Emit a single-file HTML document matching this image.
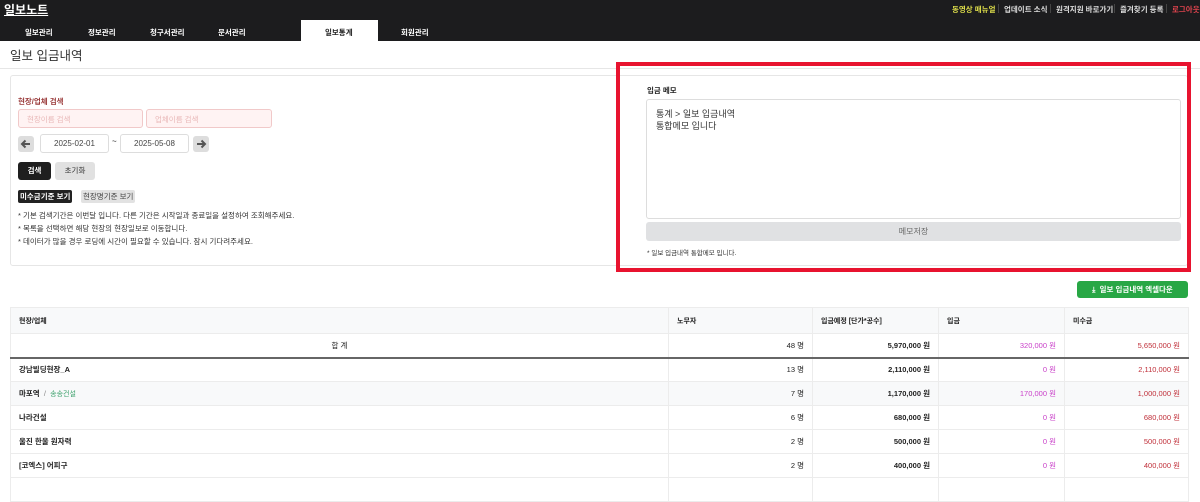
<!DOCTYPE html>
<html><head><meta charset="utf-8"><style>
*{box-sizing:border-box;margin:0;padding:0}
body{width:1200px;height:480px;overflow:hidden;background:#fff;font-family:"Liberation Sans","Noto Sans CJK KR",sans-serif;color:#222;position:relative;font-size:8px}
.a{position:absolute}
.top{left:0;top:0;width:1200px;height:41px;background:#1c1c1e}
.logo{left:4px;top:1px;color:#fff;font-weight:bold;font-size:12px;text-decoration:underline}
.tl{top:4px;font-size:7.5px;color:#ddd;font-weight:bold}
.sep{top:4px;width:1px;height:9px;background:#444}
.nav{top:27px;color:#fff;font-size:7.5px;font-weight:bold}
.card{border:1px solid #e6e6e6;border-radius:3px}
.inp{border:1px solid #f1c9c9;background:#fff3f3;border-radius:3px;color:#e9b8b8;font-size:7.5px;padding:4px 8px;height:19px}
.date{border:1px solid #ddd;border-radius:3px;height:19px;font-size:8px;color:#444;text-align:center;line-height:17px}
.arr{background:#ddd;border-radius:3px;width:16px;height:16px}
.arr svg{display:block}
.note{font-size:7.5px;color:#333;line-height:13px}
table{border-collapse:collapse;position:absolute;left:10px;top:307px;width:1179px;font-size:7.5px}
td{border:1px solid #ececec;height:24px;padding:0 8px}
th{border:1px solid #ececec;height:26px;padding:0 8px;text-align:left;font-weight:bold;font-size:7px;background:#f8f9fa}
.r{text-align:right}.b{font-weight:bold}
.pk{color:#c940c9}.rd{color:#c0303a}
tr.alt td{background:#f8f9fa}
</style></head><body>
<div class="a top"></div>
<div class="a logo">일보노트</div>
<div class="a tl" style="left:952px;color:#dede4a">동영상 매뉴얼</div>
<div class="a sep" style="left:998px"></div>
<div class="a tl" style="left:1004px">업데이트 소식</div>
<div class="a sep" style="left:1050px"></div>
<div class="a tl" style="left:1056px">원격지원 바로가기</div>
<div class="a sep" style="left:1114px"></div>
<div class="a tl" style="left:1120px">즐겨찾기 등록</div>
<div class="a sep" style="left:1166px"></div>
<div class="a tl" style="left:1172px;color:#e0434d">로그아웃</div>
<div class="a nav" style="left:25px">일보관리</div>
<div class="a nav" style="left:88px">정보관리</div>
<div class="a nav" style="left:150px">청구서관리</div>
<div class="a nav" style="left:218px">문서관리</div>
<div class="a" style="left:301px;top:20px;width:77px;height:21px;background:#fff"></div>
<div class="a nav" style="left:325px;color:#222">일보통계</div>
<div class="a nav" style="left:401px">회원관리</div>
<div class="a" style="left:10px;top:45px;font-size:12.5px;color:#333">일보 입금내역</div>
<div class="a" style="left:0;top:68px;width:1200px;height:1px;background:#e6e6e6"></div>
<div class="a card" style="left:10px;top:75px;width:1178px;height:191px"></div>
<div class="a" style="left:18px;top:96px;font-size:7.5px;font-weight:bold;color:#9a3a3a">현장/업체 검색</div>
<div class="a inp" style="left:18px;top:109px;width:125px">현장이름 검색</div>
<div class="a inp" style="left:146px;top:109px;width:126px">업체이름 검색</div>
<div class="a arr" style="left:18px;top:136px"><svg width="16" height="16" viewBox="0 0 16 16"><path d="M12 8H4M7.5 4.5L4 8l3.5 3.5" stroke="#555" stroke-width="2" fill="none"/></svg></div>
<div class="a date" style="left:40px;top:134px;width:69px">2025-02-01</div>
<div class="a" style="left:112px;top:137px;font-size:8px">~</div>
<div class="a date" style="left:120px;top:134px;width:69px">2025-05-08</div>
<div class="a arr" style="left:193px;top:136px"><svg width="16" height="16" viewBox="0 0 16 16"><path d="M4 8h8M8.5 4.5L12 8l-3.5 3.5" stroke="#555" stroke-width="2" fill="none"/></svg></div>
<div class="a" style="left:18px;top:162px;width:33px;height:18px;background:#1f1f1f;border-radius:3px;color:#fff;font-size:7.5px;font-weight:bold;text-align:center;line-height:18px">검색</div>
<div class="a" style="left:55px;top:162px;width:40px;height:18px;background:#e1e1e1;border-radius:3px;color:#333;font-size:7.5px;text-align:center;line-height:18px">초기화</div>
<div class="a" style="left:18px;top:190px;padding:1px 2px;background:#222;color:#fff;font-size:7.5px;font-weight:bold;border-radius:2px">미수금기준 보기</div>
<div class="a" style="left:81px;top:190px;padding:1px 2px;background:#e2e2e2;color:#444;font-size:7.5px;border-radius:2px">현장명기준 보기</div>
<div class="a note" style="left:18px;top:209px">* 기본 검색기간은 이번달 입니다. 다른 기간은 시작일과 종료일을 설정하여 조회해주세요.<br>* 목록을 선택하면 해당 현장의 현장일보로 이동합니다.<br>* 데이터가 많을 경우 로딩에 시간이 필요할 수 있습니다. 잠시 기다려주세요.</div>
<div class="a" style="left:616px;top:62px;width:575px;height:210px;border:4px solid #e8132f"></div>
<div class="a" style="left:647px;top:85px;font-size:7.5px;font-weight:bold">입금 메모</div>
<div class="a" style="left:646px;top:99px;width:535px;height:120px;border:1px solid #ddd;border-radius:3px;padding:8px 9px;font-size:9px;color:#333;line-height:12px">통계 &gt; 일보 입금내역<br>통합메모 입니다</div>
<div class="a" style="left:646px;top:222px;width:535px;height:19px;background:#e0e1e3;border-radius:3px;text-align:center;line-height:19px;font-size:8px;color:#666">메모저장</div>
<div class="a" style="left:647px;top:247px;font-size:6.5px;color:#333">* 일보 입금내역 통합메모 입니다.</div>
<div class="a" style="left:1077px;top:281px;width:111px;height:17px;background:#28a745;border-radius:3px;color:#fff;font-size:7.5px;font-weight:bold;text-align:center;line-height:17px">⤓ &nbsp;일보 입금내역 엑셀다운</div>
<table>
<tr><th style="width:658px">현장/업체</th><th style="width:144px">노무자</th><th style="width:126px">입금예정 [단가*공수]</th><th style="width:126px">입금</th><th>미수금</th></tr>
<tr style="border-bottom:2px solid #666"><td style="text-align:center">합 계</td><td class="r">48 명</td><td class="r b">5,970,000 원</td><td class="r pk">320,000 원</td><td class="r rd">5,650,000 원</td></tr>
<tr><td class="b">강남빌딩현장_A</td><td class="r">13 명</td><td class="r b">2,110,000 원</td><td class="r pk">0 원</td><td class="r rd">2,110,000 원</td></tr>
<tr class="alt"><td><b>마포역</b> <span style="color:#888">&nbsp;/&nbsp;</span> <span style="color:#3aa06a;font-size:7px">송송건설</span></td><td class="r">7 명</td><td class="r b">1,170,000 원</td><td class="r pk">170,000 원</td><td class="r rd">1,000,000 원</td></tr>
<tr><td class="b">나라건설</td><td class="r">6 명</td><td class="r b">680,000 원</td><td class="r pk">0 원</td><td class="r rd">680,000 원</td></tr>
<tr><td class="b">울진 한울 원자력</td><td class="r">2 명</td><td class="r b">500,000 원</td><td class="r pk">0 원</td><td class="r rd">500,000 원</td></tr>
<tr><td class="b">[코엑스] 어피구</td><td class="r">2 명</td><td class="r b">400,000 원</td><td class="r pk">0 원</td><td class="r rd">400,000 원</td></tr>
<tr><td></td><td></td><td></td><td></td><td></td></tr>
</table>
</body></html>
